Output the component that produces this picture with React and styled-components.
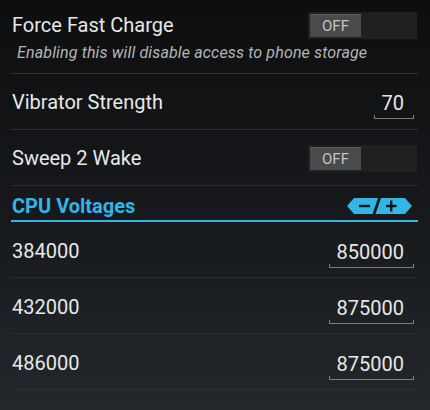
import React from 'react';
import { styled, createGlobalStyle } from 'styled-components';

const GlobalStyle = createGlobalStyle`
  html, body {
    margin: 0;
    padding: 0;
    background: #0e0f10;
  }
  body {
    font-family: Roboto, "Liberation Sans", sans-serif;
  }
`;

const Screen = styled.div`
  width: 430px;
  height: 410px;
  overflow: hidden;
  box-sizing: border-box;
  padding: 0 12px 0 11px;
  background: linear-gradient(180deg, #0d0e0f 0%, #15171a 45%, #23272b 100%);
  display: flex;
  flex-direction: column;
`;

const Row = styled.div`
  height: ${p => p.$h}px;
  box-sizing: border-box;
  border-bottom: 1px solid ${p => p.$line || '#2c2e31'};
  display: flex;
  flex-direction: column;
  justify-content: center;
  padding: ${p => p.$pt || 0}px 1px 0;
`;

const Line = styled.div`
  display: flex;
  align-items: center;
  justify-content: space-between;
`;

const Title = styled.span`
  color: #e8e8e8;
  font-size: 20px;
`;

const Summary = styled.span`
  color: #b5b5b5;
  font-size: 16px;
  font-style: italic;
  letter-spacing: 0.15px;
  margin: 4px 0 0 5px;
`;

const Track = styled.div`
  width: 109px;
  height: 27px;
  box-sizing: border-box;
  padding: 2px;
  background: #1e2021;
  display: flex;
`;

const Thumb = styled.div`
  width: 51px;
  background: #484a4b;
  border-top: 1px solid #5a5c5d;
  box-sizing: border-box;
  color: #c4c4c4;
  font-size: 15px;
  display: flex;
  align-items: center;
  justify-content: center;
`;

const Field = styled.div`
  width: ${p => p.$w}px;
  margin-right: 3px;
  box-sizing: border-box;
  padding: 0 9px 3px 0;
  position: relative;
  top: 3px;
  text-align: right;
  color: #e8e8e8;
  font-size: 20px;
  border: 1px solid #7c7e80;
  border-top: none;
  border-image: linear-gradient(to top, #7c7e80 0, #7c7e80 4px, transparent 4px) 1;
`;

const Header = styled.div`
  height: 36px;
  box-sizing: border-box;
  border-bottom: 2px solid #33b5e5;
  display: flex;
  align-items: center;
  justify-content: space-between;
  padding: 6px 6px 0 1px;
`;

const HeaderTitle = styled.span`
  color: #33b5e5;
  font-size: 20px;
  font-weight: 700;
`;

const Switch = ({ label }) => (
  <Track>
    <Thumb>{label}</Thumb>
  </Track>
);

const StepIcon = () => (
  <svg width="65" height="16" viewBox="0 0 65 16">
    <polygon points="0,8 7,0 31,0 25.5,16 7,16" fill="#33b5e5" />
    <polygon points="34,0 58,0 65,8 58,16 28.5,16" fill="#33b5e5" />
    <rect x="12" y="6.8" width="11" height="2.4" fill="#101418" />
    <rect x="39" y="6.8" width="10.5" height="2.4" fill="#101418" />
    <rect x="43" y="2.5" width="2.4" height="11" fill="#101418" />
  </svg>
);

const voltages = [
  ['384000', '850000'],
  ['432000', '875000'],
  ['486000', '875000'],
];

export default function App() {
  return (
    <>
      <GlobalStyle />
      <Screen>
        <Row $h={74}>
          <Line>
            <Title>Force Fast Charge</Title>
            <Switch label="OFF" />
          </Line>
          <Summary>Enabling this will disable access to phone storage</Summary>
        </Row>
        <Row $h={56} $pt={1}>
          <Line>
            <Title>Vibrator Strength</Title>
            <Field $w={40}>70</Field>
          </Line>
        </Row>
        <Row $h={56} $pt={1}>
          <Line>
            <Title>Sweep 2 Wake</Title>
            <Switch label="OFF" />
          </Line>
        </Row>
        <Header>
          <HeaderTitle>CPU Voltages</HeaderTitle>
          <StepIcon />
        </Header>
        {voltages.map(([freq, mv]) => (
          <Row $h={56} $pt={2} key={freq} $line="#2a2e32">
            <Line>
              <Title>{freq}</Title>
              <Field $w={85}>{mv}</Field>
            </Line>
          </Row>
        ))}
      </Screen>
    </>
  );
}
